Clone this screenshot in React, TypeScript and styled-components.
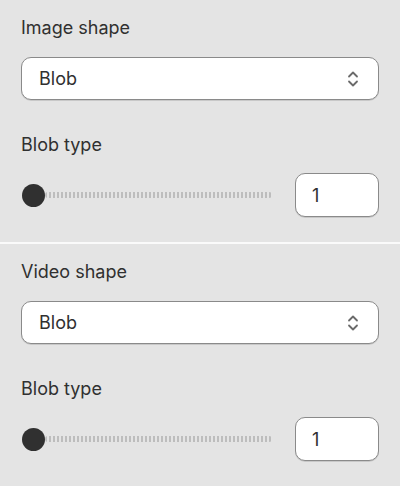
import styled, { createGlobalStyle } from "styled-components";

const GlobalStyle = createGlobalStyle`
    html, body {
        margin: 0;
        padding: 0;
        background: #e4e4e4;
    }

    body {
        font-family: Inter, "Noto Sans", sans-serif;
        color: #303030;
    }
`

const Panel = styled.div`
    width: 400px;
    display: flex;
    flex-direction: column;
`

const Section = styled.section`
    padding: 16px 21px 25px;
    display: flex;
    flex-direction: column;
    gap: 33px;
`

const Divider = styled.hr`
    margin: 0;
    border: 0;
    height: 2px;
    background: #fafafa;
`

const Field = styled.div`
    display: flex;
    flex-direction: column;
    gap: 17px;
`

const Label = styled.label`
    font-size: 18px;
    line-height: 24px;
`

const SelectBox = styled.div`
    height: 43px;
    box-sizing: border-box;
    display: flex;
    align-items: center;
    justify-content: space-between;
    padding: 0 18px 0 17px;
    background: #fff;
    border: 1px solid #8a8a8a;
    border-radius: 10px;
    box-shadow: 0 1px 0 rgba(0, 0, 0, 0.12);
    font-size: 18px;
`

const SliderRow = styled.div`
    display: flex;
    align-items: center;
    gap: 23px;
    margin-top: -1px;
`

const Slider = styled.div`
    flex: 1;
    position: relative;
    height: 24px;
    display: flex;
    align-items: center;
`

const Track = styled.div`
    margin-left: 24px;
    flex: 1;
    height: 6px;
    border-radius: 3px;
    background: repeating-linear-gradient(90deg, #bdbdbd 0 2px, transparent 2px 4px);
`

const Thumb = styled.span`
    position: absolute;
    left: 1px;
    top: 1px;
    width: 23px;
    height: 23px;
    border-radius: 50%;
    background: #303030;
`

const NumberBox = styled.div`
    width: 84px;
    height: 44px;
    box-sizing: border-box;
    display: flex;
    align-items: center;
    padding-left: 16px;
    background: #fff;
    border: 1px solid #8a8a8a;
    border-radius: 10px;
    box-shadow: 0 1px 0 rgba(0, 0, 0, 0.12);
    font-size: 18px;
`

function UpDown() {
    return (
        <svg width="14" height="20" viewBox="0 0 14 20" fill="none" stroke="#6b6b6b" strokeWidth="1.8" strokeLinecap="round" strokeLinejoin="round">
            <path d="M3 7.5 L7 3.5 L11 7.5" />
            <path d="M3 12.5 L7 16.5 L11 12.5" />
        </svg>
    );
}

function ShapeSettings({ title }: { title: string }) {
    return (
        <Section>
            <Field>
                <Label>{title}</Label>
                <SelectBox>
                    <span>Blob</span>
                    <UpDown />
                </SelectBox>
            </Field>
            <Field>
                <Label>Blob type</Label>
                <SliderRow>
                    <Slider>
                        <Track />
                        <Thumb />
                    </Slider>
                    <NumberBox>1</NumberBox>
                </SliderRow>
            </Field>
        </Section>
    );
}

function App() {
    return (
        <Panel>
            <GlobalStyle />
            <ShapeSettings title="Image shape" />
            <Divider />
            <ShapeSettings title="Video shape" />
        </Panel>
    );
}

export default App;
